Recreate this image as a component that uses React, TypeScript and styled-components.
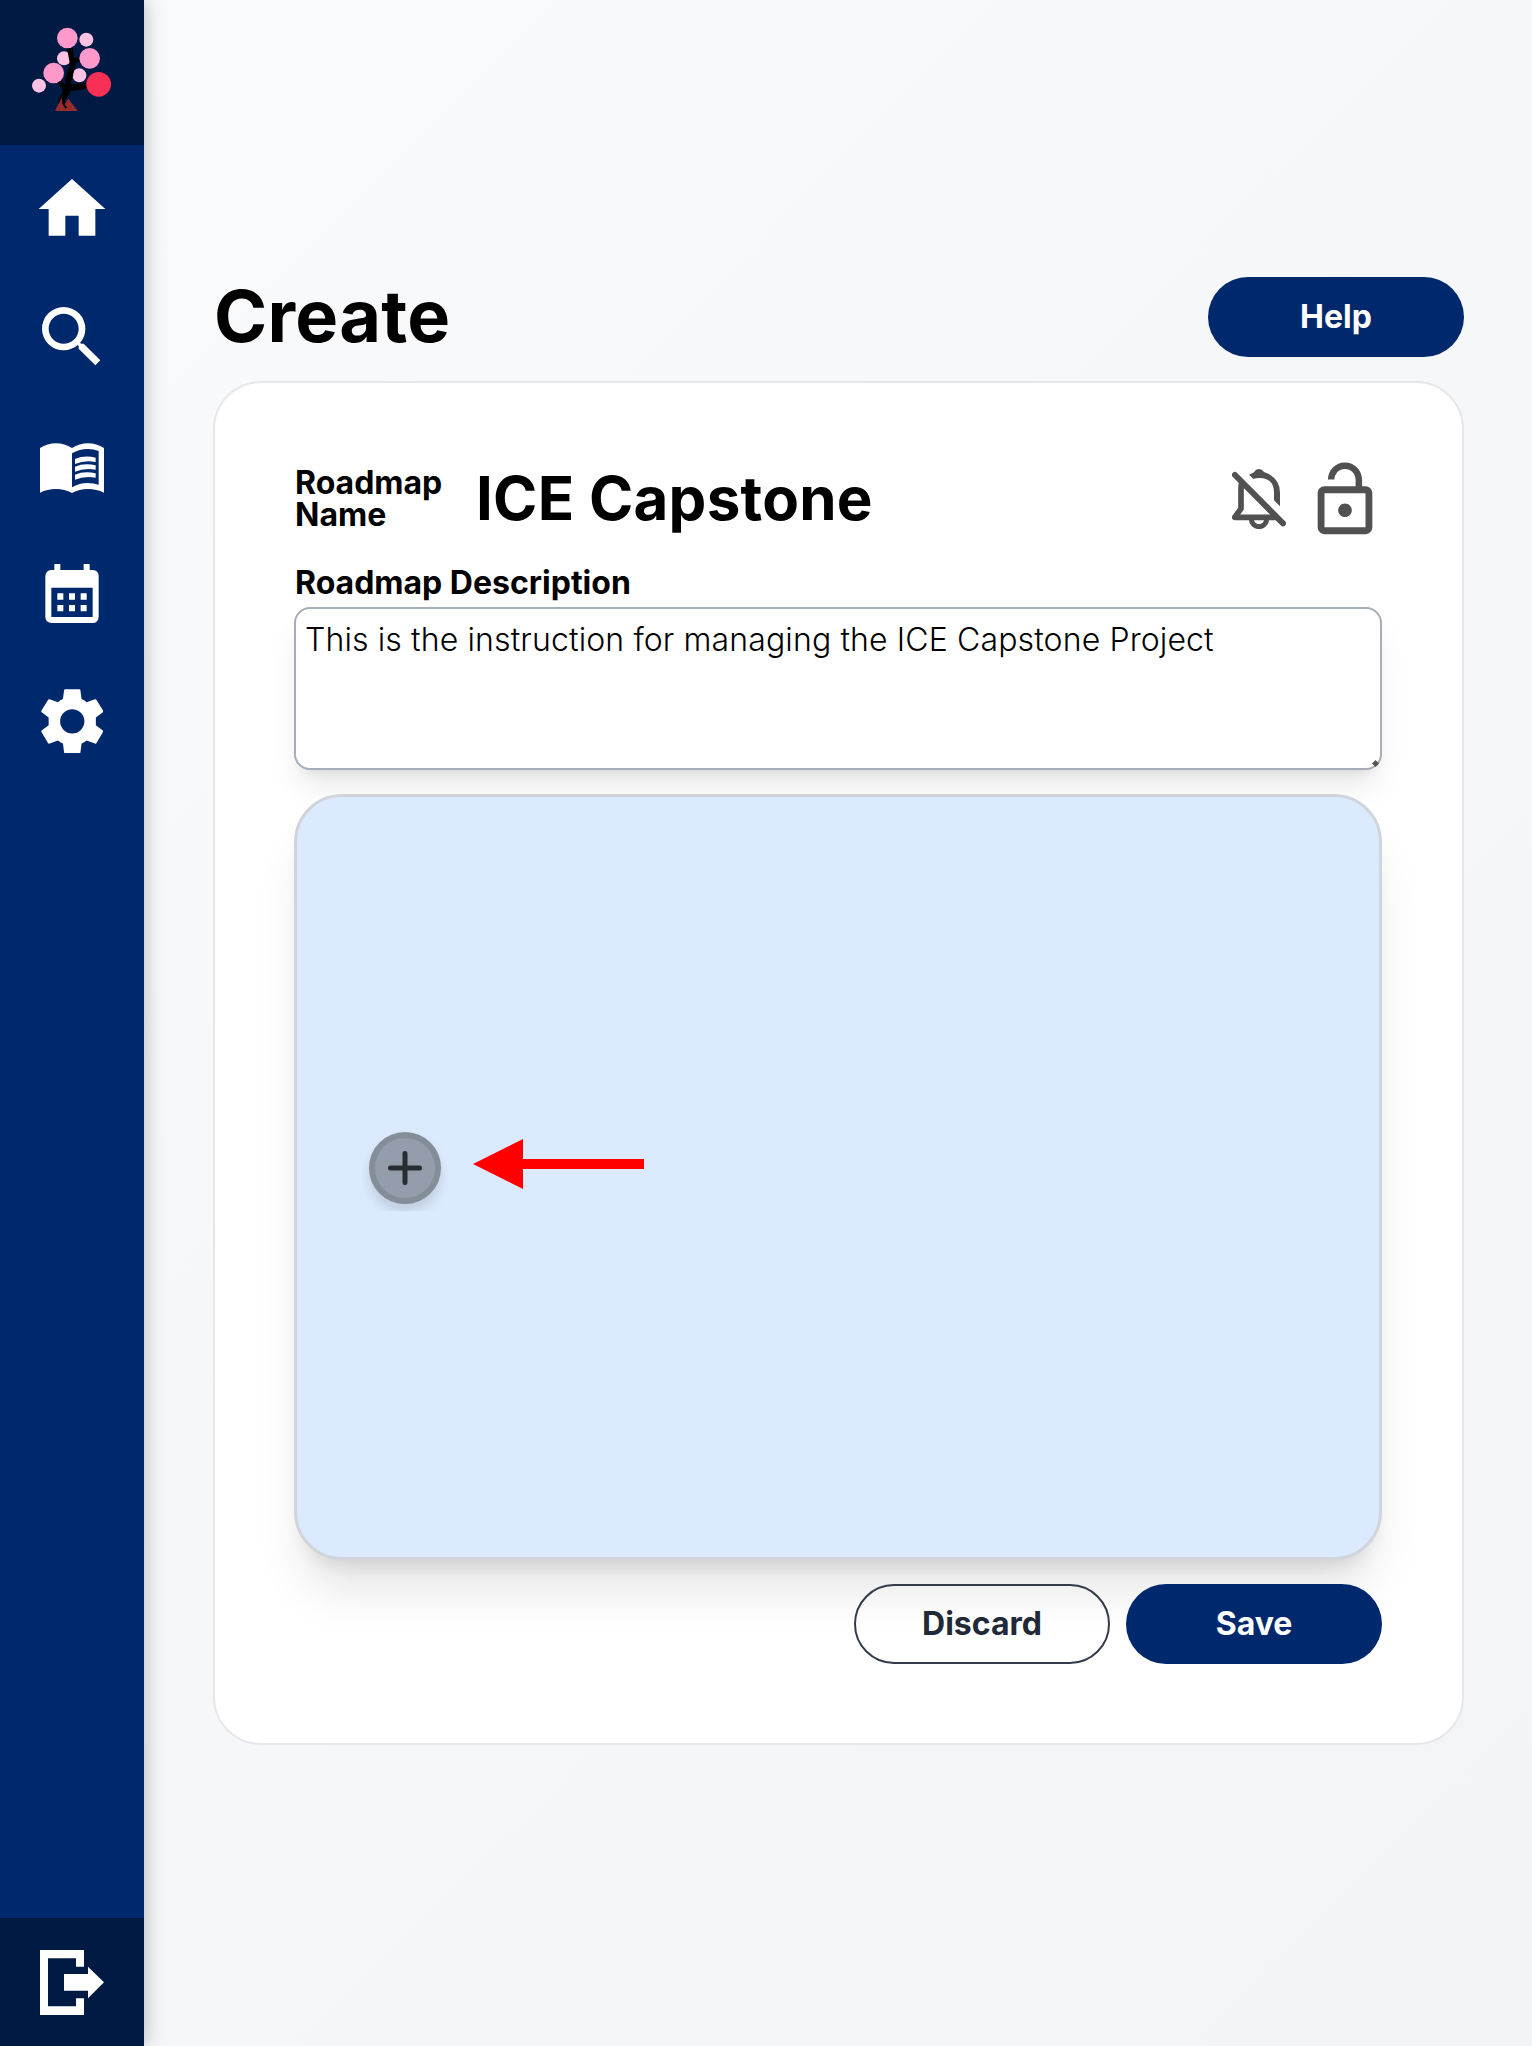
import React from "react";
import styled, { createGlobalStyle } from "styled-components";

const Global = createGlobalStyle`
  *, *::before, *::after { box-sizing: border-box; }
  body { margin: 0; font-family: Inter, "Liberation Sans", sans-serif; color: #000; }
  button { font-family: inherit; cursor: pointer; }
`;

const Page = styled.div`
  display: flex;
  width: 100%;
  height: 2046px;
  overflow: hidden;
  background: linear-gradient(135deg, #f9fafb, #f3f4f6);
`;

const Sidebar = styled.nav`
  display: flex;
  flex-direction: column;
  flex: 0 0 144px;
  background: #00296d;
  box-shadow: 0 0 20px rgba(0, 0, 0, 0.28);
`;

const LogoCell = styled.div`
  height: 145px;
  background: #001a43;
`;

const NavItem = styled.a`
  display: flex;
  align-items: center;
  justify-content: center;
  height: 128px;
  color: #fff;
`;

const BookItem = styled(NavItem)`
  padding-top: 6px;
`;

const NavList = styled.div`
  display: flex;
  flex-direction: column;
  flex: 1;
`;

const LogoutCell = styled(NavItem)`
  background: #001a43;
`;

const Icon = styled.svg<{ $w: number; $h?: number }>`
  display: block;
  flex: none;
  width: ${(p) => p.$w}px;
  height: ${(p) => p.$h ?? p.$w}px;
`;

const Main = styled.main`
  flex: 1;
  display: flex;
  flex-direction: column;
  align-items: center;
  padding-top: 277px;
`;

const Content = styled.div`
  width: 1251px;
  margin-left: 1px;
`;

const Header = styled.header`
  display: flex;
  align-items: center;
  justify-content: space-between;
  height: 80px;
  margin-bottom: 24px;
`;

const Title = styled.h1`
  margin: -3px 0 0 1px;
  font-size: 72px;
  line-height: 80px;
  font-weight: 700;
  letter-spacing: 0.25px;
`;

const Button = styled.button<{ $outline?: boolean }>`
  width: 256px;
  height: 80px;
  padding: 0;
  border-radius: 40px;
  border: ${(p) => (p.$outline ? "2px solid #333b49" : "0")};
  background: ${(p) => (p.$outline ? "transparent" : "#00296d")};
  color: ${(p) => (p.$outline ? "#1f2937" : "#fff")};
  font-size: 32px;
  line-height: 48px;
  font-weight: 700;
`;

const Card = styled.section`
  height: 1364px;
  padding: 78px 80px 80px 79px;
  border: 2px solid #e5e7eb;
  border-radius: 48px;
  background: #fff;
`;

const NameRow = styled.div`
  display: flex;
  align-items: center;
  height: 76px;
`;

const FieldLabel = styled.label`
  display: block;
  padding-left: 1px;
  font-size: 32px;
  line-height: 32px;
  font-weight: 700;
`;

const NameLabel = styled(FieldLabel)`
  width: 182px;
`;

const RoadmapName = styled.div`
  flex: 1;
  margin-top: -2px;
  font-size: 60px;
  line-height: 72px;
  font-weight: 700;
  letter-spacing: 0.25px;
`;

const Toggles = styled.div`
  display: flex;
  margin-top: 2px;
  color: #515151;
`;

const DescriptionLabel = styled(FieldLabel)`
  margin-top: 26px;
  line-height: 40px;
`;

const Description = styled.textarea`
  display: block;
  width: 100%;
  height: 163px;
  margin-top: 4px;
  padding: 8px 9px;
  border: 2px solid #a6adb8;
  border-radius: 16px;
  outline: none;
  resize: none;
  background: #fff;
  color: #000;
  font-family: inherit;
  font-size: 32px;
  line-height: 46px;
  font-weight: 300;
  letter-spacing: 0.12px;
  box-shadow: 0 20px 30px -6px rgba(0, 0, 0, 0.1), 0 8px 12px -8px rgba(0, 0, 0, 0.1);
`;

const DescriptionBox = styled.div`
  position: relative;
`;

const Grip = styled.span`
  position: absolute;
  right: 4px;
  bottom: 4px;
  width: 5px;
  height: 5px;
  background: #555;
  transform: rotate(45deg);
`;

const Canvas = styled.div`
  position: relative;
  height: 766px;
  margin-top: 24px;
  border: 3px solid #d1d5db;
  border-radius: 48px;
  background: #dbeafe;
  box-shadow: 0 40px 50px -10px rgba(0, 0, 0, 0.1), 0 16px 20px -12px rgba(0, 0, 0, 0.12);
`;

const ShadowClip = styled.div`
  position: absolute;
  left: 65px;
  top: 325px;
  width: 86px;
  height: 89px;
  padding: 10px 7px;
  overflow: hidden;
`;

const AddNode = styled.button`
  display: flex;
  align-items: center;
  justify-content: center;
  width: 72px;
  height: 72px;
  padding: 0;
  border: 6px solid #848e98;
  border-radius: 50%;
  background: #949dac;
  color: #272d31;
  box-shadow: 0 8px 12px rgba(0, 0, 0, 0.12);
`;

const Arrow = styled.svg`
  position: absolute;
  left: 176px;
  top: 342px;
  width: 171px;
  height: 50px;
`;

const Actions = styled.div`
  display: flex;
  position: relative;
  justify-content: flex-end;
  gap: 16px;
  margin-top: 24px;
`;

const Logo = () => (
  <Icon $w={144} $h={145} viewBox="0 0 432 435">
    <path d="M165 333L184 294L195 311L205 296L233 333Z" fill="#962d2d" />
    <circle cx="192" cy="175" r="21" fill="#ffc2e5" />
    <circle cx="238" cy="226" r="21" fill="#ffc2e5" />
    <path
      d="M201 144L218 143L222 174L240 171L246 180L240 186L227 188L218 232L212 252L254 250L267 259L258 266L210 274L208 284L194 300L195 316L202 322L196 326L187 311L186 292L175 313Q172 294 187 278L188 268L172 246L185 241L195 255L196 235L210 194Z"
      fill="#000"
    />
    <circle cx="202" cy="114" r="31" fill="#ff99cc" />
    <circle cx="259" cy="119" r="21" fill="#ffc2e5" />
    <circle cx="269" cy="175" r="31" fill="#ff99cc" />
    <circle cx="161" cy="219" r="31" fill="#ff99cc" />
    <circle cx="117" cy="257" r="21" fill="#ffc2e5" />
    <circle cx="296" cy="253" r="37" fill="#f93056" />
  </Icon>
);

const HomeIcon = () => (
  <Icon $w={80} viewBox="0 0 24 24">
    <path fill="currentColor" d="M10 20v-6h4v6h5v-8h3L12 3 2 12h3v8z" />
  </Icon>
);

const SearchIcon = () => (
  <Icon $w={80} viewBox="0 0 24 24">
    <path
      fill="currentColor"
      d="M15.5 14h-.79l-.28-.27A6.471 6.471 0 0 0 16 9.5 6.5 6.5 0 1 0 9.5 16c1.61 0 3.09-.59 4.23-1.57l.27.28v.79l5 4.99L20.49 19l-4.99-5zm-6 0C7.01 14 5 11.99 5 9.5S7.01 5 9.5 5 14 7.01 14 9.5 11.99 14 9.5 14z"
    />
  </Icon>
);

const BookIcon = () => (
  <Icon $w={64} $h={50} viewBox="120 489 192 150">
    <path
      fill="currentColor"
      fillRule="evenodd"
      d="M120 504Q142 490 168 490T216 504Q238 490 264 490T312 504V638Q290 627 264 627T216 639Q194 627 168 627T120 638ZM216 520V622Q238 609 264 609Q280 609 296 614V513Q280 507 264 507Q238 507 216 520Z"
    />
    <path fill="currentColor" d="M225 537Q253 525 287 533V546Q253 540 225 552ZM225 560Q253 548 287 556V569Q253 563 225 575ZM225 584Q253 572 287 580V593Q253 587 225 599Z" />
  </Icon>
);

const CalendarIcon = () => (
  <Icon $w={54} $h={59} viewBox="136 72 160 177">
    <path
      fill="currentColor"
      fillRule="evenodd"
      d="M163 72H181V90H251V72H269V90H278Q296 92 296 108V231Q294 249 278 249H154Q136 247 136 231V108Q138 90 154 90H163ZM154 143V231H278V143Z"
    />
    <path fill="currentColor" d="M172 160h18v19h-18zM207 160h18v19h-18zM242 160h18v19h-18zM172 195h18v19h-18zM207 195h18v19h-18zM242 195h18v19h-18z" />
  </Icon>
);

const GearIcon = () => (
  <Icon $w={62.5} $h={64.5} viewBox="122 447.5 188 193.5">
    <path
      fill="currentColor"
      fillRule="evenodd"
      d="M195 448H237Q240 448 240.500 451L244 477Q252 480 259 487L284 478Q287 477 289 480L309 513Q310 516 307 518L287 533V556L307 571Q310 573 309 576L289 610Q287 613 284 611L259 602Q252 608 244 611L240.500 638Q240 641 237 641H195Q192 641 191.500 638L188 611Q180 608 173 602L148 611Q145 613 143 610L123 576Q122 573 125 571L145 556V533L125 518Q122 516 123 513L143 480Q145 477 148 478L173 487Q180 480 188 477L191.500 451Q192 448 195 448ZM216 508A36.500 36.500 0 1 0 216 581A36.500 36.500 0 1 0 216 508Z"
    />
  </Icon>
);

const LogoutIcon = () => (
  <Icon $w={64} $h={65} viewBox="120 150 192 195">
    <path fill="currentColor" d="M120 150H252V200H228V175H144V319H228V295H252V345H120ZM192 222H264V200L312 247L264 295V272H192Z" />
  </Icon>
);

const BellOffIcon = () => (
  <Icon $w={54} $h={60} viewBox="126 626 162 180">
    <g fill="none" stroke="currentColor" strokeWidth="17" strokeLinejoin="round">
      <path d="M135 644L279 789" strokeLinecap="round" strokeWidth="18" />
      <path d="M155 667Q153 676 153 690V745L134 771H258" />
      <path d="M184 777a23 22 0 0 0 46 0" strokeWidth="15" />
    </g>
    <path
      fill="currentColor"
      d="M177 643L192 636Q198 626 207 626Q216 626 222 635Q270 652 270 697V738L252 720V697Q252 653 207 653Q198 653 190 656Z"
    />
  </Icon>
);

const LockOpenIcon = () => (
  <Icon $w={82} viewBox="0 0 24 24">
    <path
      fill="currentColor"
      d="M12 17c1.100 0 2-.9 2-2s-.9-2-2-2-2 .9-2 2 .9 2 2 2zm6-9h-1V6c0-2.760-2.240-5-5-5S7 3.240 7 6h1.900c0-1.710 1.390-3.100 3.100-3.100s3.100 1.390 3.100 3.100v2H6c-1.100 0-2 .9-2 2v10c0 1.100.9 2 2 2h12c1.100 0 2-.9 2-2V10c0-1.100-.9-2-2-2zm0 12H6V10h12v10z"
    />
  </Icon>
);

const LockSlot = styled.div`
  margin: 0 -4px 0 18px;
`;

const BellSlot = styled.div`
  padding-top: 10px;
`;

export default function App() {
  return (
    <>
      <Global />
      <Page>
        <Sidebar>
          <LogoCell>
            <Logo />
          </LogoCell>
          <NavList>
            <NavItem><HomeIcon /></NavItem>
            <NavItem><SearchIcon /></NavItem>
            <BookItem><BookIcon /></BookItem>
            <NavItem><CalendarIcon /></NavItem>
            <NavItem><GearIcon /></NavItem>
          </NavList>
          <LogoutCell><LogoutIcon /></LogoutCell>
        </Sidebar>
        <Main>
          <Content>
            <Header>
              <Title>Create</Title>
              <Button>Help</Button>
            </Header>
            <Card>
              <NameRow>
                <NameLabel>Roadmap Name</NameLabel>
                <RoadmapName>ICE Capstone</RoadmapName>
                <Toggles>
                  <BellSlot><BellOffIcon /></BellSlot>
                  <LockSlot><LockOpenIcon /></LockSlot>
                </Toggles>
              </NameRow>
              <DescriptionLabel>Roadmap Description</DescriptionLabel>
              <DescriptionBox>
                <Description
                  spellCheck={false}
                  defaultValue="This is the instruction for managing the ICE Capstone Project"
                />
                <Grip />
              </DescriptionBox>
              <Canvas>
                <ShadowClip>
                  <AddNode aria-label="Add">
                    <Icon $w={34} viewBox="0 0 34 34">
                      <path d="M17 2.500V31.500M2.500 17H31.500" stroke="currentColor" strokeWidth="5" strokeLinecap="round" />
                    </Icon>
                  </AddNode>
                </ShadowClip>
                <Arrow viewBox="0 0 171 50">
                  <path d="M0 25L50 0V20H171V30H50V50Z" fill="#f00" />
                </Arrow>
              </Canvas>
              <Actions>
                <Button $outline>Discard</Button>
                <Button>Save</Button>
              </Actions>
            </Card>
          </Content>
        </Main>
      </Page>
    </>
  );
}
